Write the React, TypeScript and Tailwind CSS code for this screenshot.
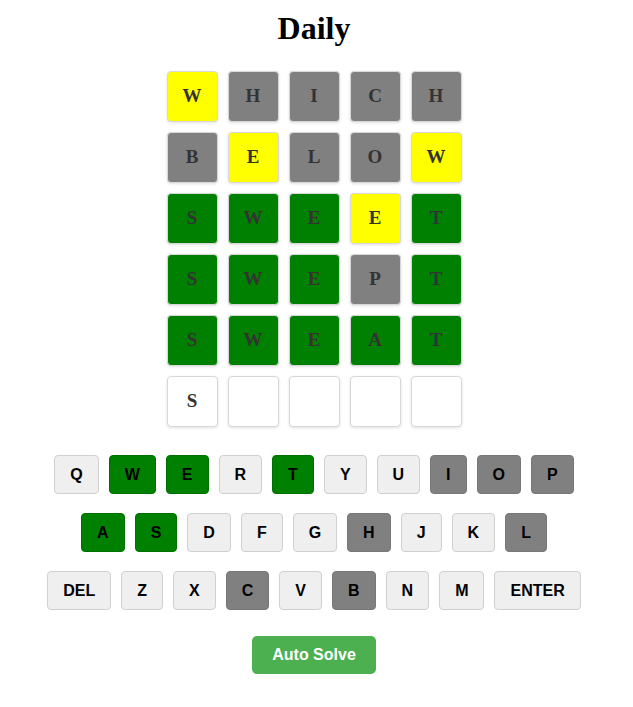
import React from "react";

type Mark = "g" | "y" | "x" | "e";

const board: { l: string; m: Mark }[][] = [
    [{ l: "W", m: "y" }, { l: "H", m: "x" }, { l: "I", m: "x" }, { l: "C", m: "x" }, { l: "H", m: "x" }],
    [{ l: "B", m: "x" }, { l: "E", m: "y" }, { l: "L", m: "x" }, { l: "O", m: "x" }, { l: "W", m: "y" }],
    [{ l: "S", m: "g" }, { l: "W", m: "g" }, { l: "E", m: "g" }, { l: "E", m: "y" }, { l: "T", m: "g" }],
    [{ l: "S", m: "g" }, { l: "W", m: "g" }, { l: "E", m: "g" }, { l: "P", m: "x" }, { l: "T", m: "g" }],
    [{ l: "S", m: "g" }, { l: "W", m: "g" }, { l: "E", m: "g" }, { l: "A", m: "g" }, { l: "T", m: "g" }],
    [{ l: "S", m: "e" }, { l: "", m: "e" }, { l: "", m: "e" }, { l: "", m: "e" }, { l: "", m: "e" }],
];

const tileColor: Record<Mark, string> = {
    g: "bg-[#008000]",
    y: "bg-[#ffff00]",
    x: "bg-[#808080]",
    e: "bg-white",
};

const keyRows = [
    ["Q", "W", "E", "R", "T", "Y", "U", "I", "O", "P"],
    ["A", "S", "D", "F", "G", "H", "J", "K", "L"],
    ["DEL", "Z", "X", "C", "V", "B", "N", "M", "ENTER"],
];

const green = ["W", "E", "T", "A", "S"];
const gray = ["I", "O", "P", "H", "L", "C", "B"];

function keyColor(k: string) {
    if (green.includes(k)) return "bg-[#008000] border-[#007000]";
    if (gray.includes(k)) return "bg-[#808080] border-[#777]";
    return "bg-[#efefef] border-[#d0d0d0]";
}

export default function App() {
    return (
        <main className="w-[628px] bg-white flex flex-col items-center pb-[33px]">
            <h1
                className="mt-[10px] mb-[25px] text-[32px] leading-[36px] font-bold text-black"
                style={{ fontFamily: '"Liberation Serif", "Times New Roman", serif' }}
            >
                Daily
            </h1>

            {/* Board */}
            <div className="flex flex-col gap-[10px]">
                {board.map((row, i) => (
                    <div key={i} className="flex gap-[10px]">
                        {row.map((t, j) => (
                            <div
                                key={j}
                                className={`w-[51px] h-[51px] flex items-center justify-center rounded-[4px] border border-[#d8d8d8] shadow-[0_1px_3px_rgba(0,0,0,0.12)] text-[19px] font-bold text-[#333] ${tileColor[t.m]}`}
                                style={{ fontFamily: '"Liberation Serif", "Times New Roman", serif' }}
                            >
                                {t.l}
                            </div>
                        ))}
                    </div>
                ))}
            </div>

            {/* Keyboard */}
            <div className="mt-[28px] flex flex-col items-center gap-[19px]">
                {keyRows.map((row, i) => (
                    <div key={i} className="flex gap-[10px]">
                        {row.map((k) => (
                            <button
                                key={k}
                                className={`h-[39px] px-[15px] border rounded-[4px] text-[16px] font-bold text-black ${keyColor(k)}`}
                                style={{ fontFamily: '"Liberation Sans", Arial, sans-serif' }}
                            >
                                {k}
                            </button>
                        ))}
                    </div>
                ))}
            </div>

            <button
                className="mt-[26px] h-[38px] px-[20px] rounded-[5px] bg-[#4caf50] text-white text-[16px] font-bold"
                style={{ fontFamily: '"Liberation Sans", Arial, sans-serif' }}
            >
                Auto Solve
            </button>
        </main>
    );
}
